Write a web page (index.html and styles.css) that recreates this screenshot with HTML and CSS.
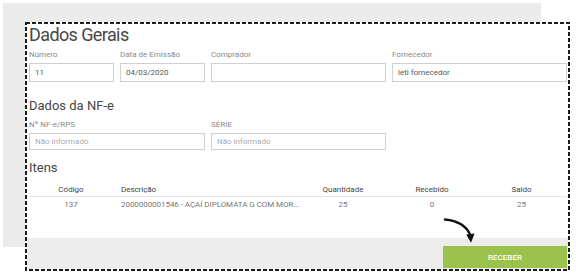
FILE: index.html
```html
<!DOCTYPE html>
<html lang="pt-BR">
<head>
    <meta charset="UTF-8">
    <meta name="viewport" content="width=device-width, initial-scale=1.0">
    <title>Recebimento</title>
    <link rel="stylesheet" href="styles.css">
</head>
<body>

    <div class="backdrop"></div>

    <div class="modal">
        <div class="modal-body">
            <h2 class="title">Dados Gerais</h2>
            <div class="form-grid">
                <div class="field">
                    <label>Número</label>
                    <input type="text" value="11">
                </div>
                <div class="field">
                    <label>Data de Emissão</label>
                    <input type="text" value="04/03/2020">
                </div>
                <div class="field">
                    <label>Comprador</label>
                    <input type="text" value="">
                </div>
                <div class="field">
                    <label>Fornecedor</label>
                    <input type="text" value="leti fornecedor">
                </div>
            </div>

            <h3 class="subtitle">Dados da NF-e</h3>
            <div class="form-grid compact">
                <div class="field span-2">
                    <label>Nº NF-e/RPS</label>
                    <input type="text" placeholder="Não informado">
                </div>
                <div class="field">
                    <label>SÉRIE</label>
                    <input type="text" placeholder="Não informado">
                </div>
            </div>

            <h3 class="subtitle items-title">Itens</h3>
            <table class="items">
                <colgroup>
                    <col class="col-code">
                    <col class="col-desc">
                    <col class="col-qty">
                    <col class="col-rec">
                    <col>
                </colgroup>
                <thead>
                    <tr>
                        <th>Código</th>
                        <th class="left">Descrição</th>
                        <th>Quantidade</th>
                        <th>Recebido</th>
                        <th>Saldo</th>
                    </tr>
                </thead>
                <tbody>
                    <tr>
                        <td>137</td>
                        <td class="left">2000000001546 - AÇAÍ DIPLOMATA G COM MOR...</td>
                        <td>25</td>
                        <td>0</td>
                        <td>25</td>
                    </tr>
                </tbody>
            </table>
        </div>

        <div class="modal-footer">
            <button class="btn-receber">RECEBER</button>
        </div>

        <!-- dashed highlight frame -->
        <svg class="frame" width="545" height="249" viewBox="0 0 545 249">
            <rect x="1" y="1" width="543" height="247" fill="none" stroke="#1c1c1c" stroke-width="2" stroke-dasharray="4 2"/>
        </svg>
    </div>

    <!-- pointer arrow -->
    <svg class="arrow" width="44" height="36" viewBox="0 0 44 36">
        <path d="M7 7.5 C18 8.5, 28 13, 32.3 23" fill="none" stroke="#111" stroke-width="2.4" stroke-linecap="round"/>
        <polygon points="28.2,22.6 36.6,21.6 33,30.8" fill="#111"/>
    </svg>

</body>
</html>
```

FILE: styles.css
```css
body {
    margin: 0;
    width: 576px;
    height: 276px;
    position: relative;
    background: #ffffff;
    font-family: Roboto, "Liberation Sans", sans-serif;
    overflow: hidden;
}
.backdrop {
    margin: 3px;
    width: 538px;
    height: 244px;
    background: #ebebeb;
}

/* Modal */
.modal {
    position: absolute;
    left: 25px;
    top: 22px;
    width: 545px;
    height: 249px;
    box-sizing: border-box;
    padding: 2px;
    background: #ffffff;
    display: flex;
    flex-direction: column;
}
.frame {
    position: absolute;
    left: 0;
    top: 0;
    pointer-events: none;
}
.modal-body {
    flex: 1;
    padding: 0 1px 0 2px;
}
.title {
    margin: 1px 0 0;
    font-size: 18px;
    line-height: 20px;
    font-weight: 400;
    letter-spacing: -0.6px;
    color: #474747;
}
.subtitle {
    margin: 16px 0 0;
    font-size: 13px;
    line-height: 16px;
    font-weight: 400;
    color: #474747;
}
.items-title {
    margin-top: 10px;
}

/* Forms */
.form-grid {
    display: grid;
    grid-template-columns: 85px 85px 1fr 1fr;
    column-gap: 6px;
    margin-top: 5px;
}
.form-grid.compact {
    margin-top: 6px;
}
.field {
    display: flex;
    flex-direction: column;
}
.field.span-2 {
    grid-column: span 2;
}
.field label {
    font-size: 8px;
    line-height: 10px;
    color: #8a8a8a;
    margin-bottom: 3px;
}
.field input {
    height: 19px;
    box-sizing: border-box;
    border: 1px solid #cfcfcf;
    padding: 0 5px;
    font-family: Roboto, "Liberation Sans", sans-serif;
    font-size: 8px;
    color: #555;
    outline: none;
}
.form-grid.compact input {
    height: 17px;
}
.field input::placeholder {
    color: #aaa;
}

/* Items table */
.items {
    width: 100%;
    margin-top: 4px;
    border-collapse: collapse;
    table-layout: fixed;
    font-size: 8px;
    line-height: 10px;
}
.col-code { width: 84px; }
.col-desc { width: 185px; }
.col-qty { width: 90px; }
.col-rec { width: 88px; }
.items th {
    font-weight: 400;
    color: #444;
    text-align: center;
    padding: 5px 4px 1px;
    border-bottom: 1px solid #e6e6e6;
}
.items td {
    color: #777;
    text-align: center;
    padding: 3px 4px;
    white-space: nowrap;
}
.items .left {
    text-align: left;
    padding: 3px 0 3px 8px;
    letter-spacing: -0.05px;
}
.items th.left {
    padding: 5px 0 1px 8px;
}

/* Footer */
.modal-footer {
    height: 31px;
    box-sizing: border-box;
    padding: 8px 1px 1px 0;
    background: #ececec;
    display: flex;
    justify-content: flex-end;
}
.btn-receber {
    width: 124px;
    height: 22px;
    border: none;
    background: #9bc34b;
    color: #ffffff;
    font-family: Roboto, "Liberation Sans", sans-serif;
    font-size: 8px;
    font-weight: 500;
    cursor: pointer;
}

/* Arrow */
.arrow {
    position: absolute;
    left: 438px;
    top: 212px;
}
```
